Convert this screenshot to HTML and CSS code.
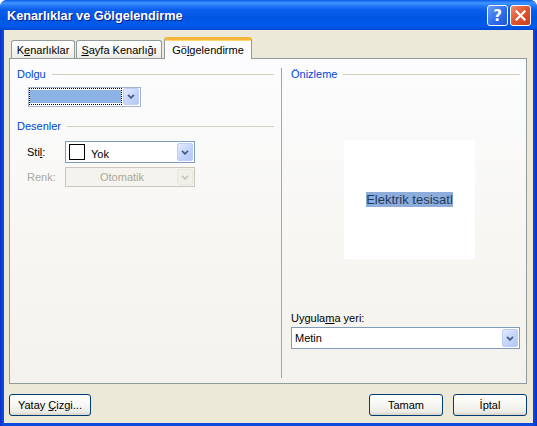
FILE: index.html
```html
<!DOCTYPE html>
<html lang="tr">
<head>
<meta charset="utf-8">
<title>Kenarlıklar ve Gölgelendirme</title>
<link rel="stylesheet" href="styles.css">
</head>
<body>
<div class="window">
  <div class="titlebar">
    <span class="title">Kenarlıklar ve Gölgelendirme</span>
    <div class="caption-buttons">
      <span class="cbtn help">?</span>
      <span class="cbtn close"><svg width="11" height="11" viewBox="0 0 11 11"><path d="M1.5 1.5 L9.5 9.5 M9.5 1.5 L1.5 9.5" stroke="#fff" stroke-width="2.2" stroke-linecap="square" fill="none"/></svg></span>
    </div>
  </div>
  <div class="client">
    <div class="tabs">
      <div class="tab tab1">K<u>e</u>narlıklar</div>
      <div class="tab tab2"><u>S</u>ayfa Kenarlığı</div>
      <div class="tab active">Gö<u>l</u>gelendirme</div>
    </div>
    <div class="panel">
      <div class="col left">
        <div class="group-title"><span>Dolgu</span><i class="rule"></i></div>
        <div class="combo fill">
          <div class="value"><div class="focus"><div class="swatch"></div></div></div>
          <div class="arrow"><svg width="8" height="5" viewBox="0 0 8 5"><path d="M1 0.8 L4 3.8 L7 0.8" stroke="#4D6185" stroke-width="1.9" fill="none"/></svg></div>
        </div>
        <div class="group-title second"><span>Desenler</span><i class="rule"></i></div>
        <div class="row stil">
          <span class="lbl">Sti<u>l</u>:</span>
          <div class="combo style">
            <div class="value"><span class="box"></span><span class="txt">Yok</span></div>
            <div class="arrow"><svg width="8" height="5" viewBox="0 0 8 5"><path d="M1 0.8 L4 3.8 L7 0.8" stroke="#4D6185" stroke-width="1.9" fill="none"/></svg></div>
          </div>
        </div>
        <div class="row renk">
          <span class="lbl disabled-text">Renk:</span>
          <div class="combo disabled">
            <div class="value center">Otomatik</div>
            <div class="arrow"><svg width="8" height="5" viewBox="0 0 8 5"><path d="M1 0.8 L4 3.8 L7 0.8" stroke="#C9C7BA" stroke-width="1.9" fill="none"/></svg></div>
          </div>
        </div>
      </div>
      <div class="col right">
        <div class="group-title"><span>Önizleme</span><i class="rule"></i></div>
        <div class="preview"><span class="sample">Elektrik tesisatl</span></div>
        <div class="apply-label">Uygula<u>m</u>a yeri:</div>
        <div class="combo apply">
          <div class="value"><span class="txt">Metin</span></div>
          <div class="arrow"><svg width="8" height="5" viewBox="0 0 8 5"><path d="M1 0.8 L4 3.8 L7 0.8" stroke="#4D6185" stroke-width="1.9" fill="none"/></svg></div>
        </div>
      </div>
    </div>
    <div class="footer">
      <button class="btn wide">Yatay <u>Ç</u>izgi...</button>
      <span class="spacer"></span>
      <button class="btn">Tamam</button>
      <button class="btn">İptal</button>
    </div>
  </div>
</div>
</body>
</html>
```

FILE: styles.css
```css
html, body {
  margin: 0;
  padding: 0;
  background: #ffffff;
}

.window {
  width: 537px;
  height: 426px;
  display: flex;
  flex-direction: column;
  background: linear-gradient(90deg, #0A2FC8 0, #0C4BDC 3px, #0C4BDC 533px, #0A2FC8 537px);
  border-radius: 7px 7px 0 0;
  overflow: hidden;
  font-family: "Liberation Sans", Arial, sans-serif;
  font-size: 11px;
  color: #000;
}

.titlebar {
  flex: none;
  height: 30px;
  display: flex;
  align-items: center;
  padding: 0 6px 0 7px;
  box-sizing: border-box;
  background: linear-gradient(180deg, #0A5BE8 0px, #3D95FF 3px, #2378F8 6px, #0A5DEA 10px, #0056E2 18px, #005AEC 26px, #0048D3 30px);
}

.title {
  color: #fff;
  font-weight: bold;
  font-size: 12.7px;
  text-shadow: 1px 1px 0 #0A1E8C;
  margin-top: 1px;
}

.caption-buttons {
  margin-left: auto;
  display: flex;
  gap: 2px;
  margin-top: 1px;
}

.cbtn {
  width: 19px;
  height: 19px;
  border: 1px solid #fff;
  border-radius: 3px;
  display: flex;
  align-items: center;
  justify-content: center;
  color: #fff;
  font-weight: bold;
  font-size: 15px;
  font-family: "DejaVu Sans", sans-serif;
}

.help {
  background: linear-gradient(135deg, #6A9CFB 0%, #2F6EEA 55%, #1D56D8 100%);
}

.close {
  background: linear-gradient(135deg, #F0896A 0%, #E0532F 50%, #C8401E 100%);
}

.client {
  flex: 1;
  margin: 0 4px 3px 4px;
  background: #ECE9D8;
  display: flex;
  flex-direction: column;
  padding: 7px 6px 0 5px;
}

.tabs {
  flex: none;
  height: 22px;
  display: flex;
  align-items: flex-end;
  margin-bottom: -1px;
  position: relative;
  z-index: 1;
}

.tab {
  box-sizing: border-box;
  height: 18px;
  margin-bottom: 1px;
  border: 1px solid #919B9C;
  border-bottom: none;
  border-radius: 3px 3px 0 0;
  background: linear-gradient(180deg, #FFFFFF 0%, #F8F8F5 40%, #EDECE6 100%);
  display: flex;
  align-items: center;
  justify-content: center;
  white-space: nowrap;
}

.tab1 { width: 64px; margin-left: 2px; }
.tab2 { width: 86px; margin-left: 1px; }

.tab.active {
  width: 88px;
  height: 22px;
  margin-bottom: 0;
  margin-left: 2px;
  background: #FCFCFE;
  border-top: 3px solid #F7B53A;
  box-shadow: inset 0 1px 0 #FFD66B;
  border-radius: 3px 3px 0 0;
}

.panel {
  flex: none;
  height: 326px;
  box-sizing: border-box;
  border: 1px solid #919B9C;
  background: linear-gradient(180deg, #FCFCFE 0%, #F8F7F4 50%, #F3F2EC 100%);
  display: grid;
  grid-template-columns: 271px 1fr;
}

.col {
  display: flex;
  flex-direction: column;
}

.left {
  padding: 9px 7px 0 7px;
}

.right {
  border-left: 1px solid #ACA899;
  margin: 9px 0 5px 0;
  padding: 0 6px 0 9px;
}

.group-title {
  height: 13px;
  line-height: 13px;
  display: flex;
  align-items: center;
  gap: 6px;
  color: #0046D5;
  white-space: nowrap;
}

.group-title .rule {
  flex: 1;
  height: 1px;
  background: #D0D0BF;
}

.group-title.second {
  margin-top: 13px;
}

.combo {
  box-sizing: border-box;
  display: flex;
  border: 1px solid #7F9DB9;
  background: #fff;
  padding: 1px;
}

.combo .value {
  flex: 1;
  display: flex;
  align-items: center;
  min-width: 0;
}

.combo .arrow {
  flex: none;
  width: 15px;
  box-sizing: border-box;
  border: 1px solid #BCCEF8;
  border-radius: 2px;
  background: linear-gradient(135deg, #E3ECFE 0%, #C6D6FC 50%, #B3C8F6 100%);
  display: flex;
  align-items: center;
  justify-content: center;
}

.fill {
  margin-top: 6px;
  margin-left: 11px;
  width: 113px;
  height: 20px;
  border-color: #A5B4C8;
  padding: 0 1px 1px 0;
}

.fill .value {
  padding-right: 1px;
}

.fill .focus {
  box-sizing: border-box;
  width: 95px;
  height: 100%;
  border: 1px dotted #000;
  padding: 1px 0;
}

.fill .swatch {
  height: 100%;
  background: #8DB2E5;
}

.fill .arrow {
  width: 16px;
}

.row {
  display: flex;
  align-items: center;
  padding-left: 10px;
}

.row .lbl {
  width: 38px;
}

.stil {
  margin-top: 8px;
}

.style {
  width: 130px;
  height: 22px;
}

.style .box {
  box-sizing: border-box;
  width: 16px;
  height: 16px;
  border: 1px solid #000;
  background: #fff;
  margin-left: 2px;
}

.style .txt {
  margin-left: 6px;
  margin-top: 3px;
}

.style .arrow {
  width: 16px;
}

.renk {
  margin-top: 4px;
}

.disabled-text {
  color: #ACA899;
}

.combo.disabled {
  width: 130px;
  height: 20px;
  border-color: #C9C7BA;
  background: #F4F3EE;
}

.combo.disabled .value {
  justify-content: center;
  color: #ACA899;
}

.combo.disabled .arrow {
  width: 16px;
  border-color: #E8E7DE;
  background: #F0EFE8;
}

.preview {
  margin-top: 59px;
  margin-left: 53px;
  width: 131px;
  height: 119px;
  background: #fff;
  display: flex;
  align-items: center;
  justify-content: center;
}

.sample {
  font-family: "Liberation Sans", Arial, sans-serif;
  font-size: 13px;
  line-height: 15px;
  background: #8EADDB;
  color: #1E3A5E;
  white-space: nowrap;
}

.apply-label {
  margin-top: 53px;
  line-height: 13px;
  height: 13px;
}

.apply {
  margin-top: 2px;
  width: 229px;
  height: 22px;
}

.apply .txt {
  margin-left: 2px;
}

.apply .arrow {
  width: 16px;
}

.footer {
  flex: none;
  margin-top: 10px;
  display: flex;
  gap: 10px;
}

.spacer {
  flex: 1;
}

.btn {
  box-sizing: border-box;
  width: 74px;
  height: 22px;
  padding: 0;
  border: 1px solid #003C74;
  border-radius: 3px;
  background: linear-gradient(180deg, #FFFFFF 0%, #F6F6F2 50%, #ECEBE5 85%, #D8D3C6 100%);
  font-family: "Liberation Sans", Arial, sans-serif;
  font-size: 11px;
  color: #000;
}

.btn.wide {
  width: 82px;
}

u {
  text-decoration: underline;
  text-underline-offset: 1px;
}
```
